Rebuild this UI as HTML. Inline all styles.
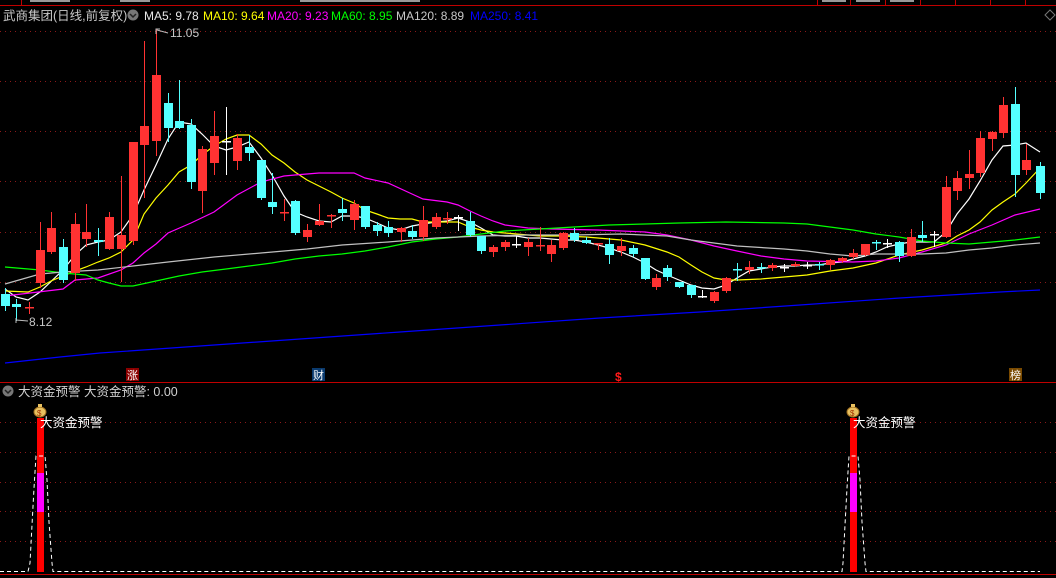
<!DOCTYPE html>
<html><head><meta charset="utf-8"><style>
html,body{margin:0;padding:0;background:#000;width:1056px;height:578px;overflow:hidden}
svg{display:block}
text{font-family:"Liberation Sans","Noto Sans CJK SC",sans-serif}
</style></head><body>
<svg id="s" width="1056" height="578" viewBox="0 0 1056 578" xmlns="http://www.w3.org/2000/svg">
<rect width="1056" height="578" fill="#000"/>
<!-- top strip -->
<line x1="0" y1="5.5" x2="1056" y2="5.5" stroke="#c00000"/>
<g stroke="#c00000"><line x1="21.5" y1="0" x2="21.5" y2="5"/><line x1="817.5" y1="0" x2="817.5" y2="5"/><line x1="850.5" y1="0" x2="850.5" y2="5"/><line x1="885.5" y1="0" x2="885.5" y2="5"/><line x1="920.5" y1="0" x2="920.5" y2="5"/><line x1="955.5" y1="0" x2="955.5" y2="5"/><line x1="990.5" y1="0" x2="990.5" y2="5"/><line x1="1025.5" y1="0" x2="1025.5" y2="5"/></g>
<g fill="#999"><rect x="30" y="0" width="40" height="2"/><rect x="120" y="0" width="30" height="2"/><rect x="300" y="0" width="120" height="2"/><rect x="822" y="0" width="24" height="2"/><rect x="856" y="0" width="24" height="2"/><rect x="890" y="0" width="24" height="2"/></g>
<!-- grid -->
<g stroke="#8a1a1a" stroke-dasharray="1 4">
<line x1="0" y1="31.5" x2="1056" y2="31.5"/><line x1="0" y1="81.5" x2="1056" y2="81.5"/><line x1="0" y1="131.5" x2="1056" y2="131.5"/><line x1="0" y1="181.5" x2="1056" y2="181.5"/><line x1="0" y1="232.5" x2="1056" y2="232.5"/><line x1="0" y1="282.5" x2="1056" y2="282.5"/>
<line x1="0" y1="422.5" x2="1056" y2="422.5"/><line x1="0" y1="452.5" x2="1056" y2="452.5"/><line x1="0" y1="482.5" x2="1056" y2="482.5"/><line x1="0" y1="511.5" x2="1056" y2="511.5"/><line x1="0" y1="541.5" x2="1056" y2="541.5"/>
</g>
<path d="M1050 10 L1055 15 L1050 20 L1045 15 Z" fill="none" stroke="#777"/>
<!-- header -->
<text x="3" y="20" font-size="12.5" fill="#c8c8c8">武商集团(日线,前复权)</text>
<circle cx="133" cy="15" r="5.5" fill="#777"/><path d="M130 14 L133 17 L136 14" stroke="#222" stroke-width="1.5" fill="none"/>
<text x="144" y="20" font-size="12" fill="#e8e8e8">MA5: 9.78</text>
<text x="203" y="20" font-size="12" fill="#ffff00">MA10: 9.64</text>
<text x="267" y="20" font-size="12" fill="#ff00ff">MA20: 9.23</text>
<text x="331" y="20" font-size="12" fill="#00ff00">MA60: 8.95</text>
<text x="396" y="20" font-size="12" fill="#c8c8c8">MA120: 8.89</text>
<text x="470" y="20" font-size="12" fill="#0000ff">MA250: 8.41</text>
<g id="ma"></g>
<g id="k"></g>
<!-- labels -->
<path d="M156 34 L156 29 L160 29 M157 30 L168 33" stroke="#bbb" fill="none"/>
<text x="170" y="37" font-size="12" fill="#c8c8c8">11.05</text>
<path d="M16 323 L16 318 M16 320 L28 321" stroke="#bbb" fill="none"/>
<text x="29" y="326" font-size="12" fill="#c8c8c8">8.12</text>
<!-- markers -->
<rect x="126" y="368" width="13" height="13" fill="#8b0000"/><text x="127" y="379" font-size="11" fill="#fff">涨</text>
<rect x="312" y="368" width="13" height="13" fill="#0a3a6e"/><text x="313" y="379" font-size="11" fill="#fff">财</text>
<text x="615" y="381" font-size="12" font-weight="bold" fill="#ff1a1a">$</text>
<rect x="1009" y="368" width="13" height="13" fill="#7a4a00"/><text x="1010" y="379" font-size="11" fill="#fff">榜</text>
<line x1="0" y1="382.5" x2="1056" y2="382.5" stroke="#c00000"/>
<line x1="0" y1="574.5" x2="1056" y2="574.5" stroke="#c00000"/>
<!-- lower panel -->
<circle cx="8" cy="391" r="5.5" fill="#777"/><path d="M5 390 L8 393 L11 390" stroke="#222" stroke-width="1.5" fill="none"/>
<text x="18" y="396" font-size="12.5" fill="#d0d0d0">大资金预警 大资金预警: 0.00</text>
<rect x="37" y="418" width="7" height="154" fill="#ff0000"/><rect x="37" y="473" width="7" height="39" fill="#ff00ff"/>
<rect x="850" y="418" width="7" height="154" fill="#ff0000"/><rect x="850" y="473" width="7" height="39" fill="#ff00ff"/>
<g stroke="#fff" stroke-dasharray="4 3" fill="none">
<path d="M0 571.5 L28 571.5 L30 563 L32 525 L34 488 L36 456 L45 456 L47 480 L49 522 L52 563 L53 571.5 L842 571.5 L843 563 L845 525 L847 488 L849 456 L858 456 L860 480 L862 522 L865 563 L866 571.5 L1040 571.5"/>
</g>
<g id="bag1"><ellipse cx="40" cy="412" rx="6" ry="5" fill="#e8c060" stroke="#a07020"/><rect x="38" y="404" width="4" height="3" fill="#e8c060"/><text x="37" y="416" font-size="8" fill="#a03000">$</text></g>
<g><ellipse cx="853" cy="412" rx="6" ry="5" fill="#e8c060" stroke="#a07020"/><rect x="851" y="404" width="4" height="3" fill="#e8c060"/><text x="850" y="416" font-size="8" fill="#a03000">$</text></g>
<text x="40" y="427" font-size="12.5" fill="#fff">大资金预警</text>
<text x="853" y="427" font-size="12.5" fill="#fff">大资金预警</text>
</svg>
<script>
var NS="http://www.w3.org/2000/svg";
// x, bodyTop, bodyBot, wickTop, wickBot, color(r/c/w)
var K=[
[5,294,306,288,310,'c'],[16,304,307,299,320,'c'],[29,307,308,302,313,'r'],[40,250,283,222,287,'r'],[51,228,252,212,253,'r'],
[63,247,280,239,282,'c'],[75,224,273,213,280,'r'],[86,232,239,204,246,'r'],[98,240,242,228,255,'c'],[109,217,249,212,249,'r'],
[121,235,249,176,281,'r'],[133,142,241,142,244,'r'],[144,126,145,41,197,'r'],[156,75,141,29,155,'r'],[168,103,128,93,141,'c'],
[179,121,128,80,128,'c'],[191,125,182,119,188,'c'],[202,149,191,146,212,'r'],[214,136,163,111,174,'r'],[226,141,142,107,174,'w'],
[237,138,161,134,169,'r'],[249,147,153,135,160,'c'],[261,160,198,160,199,'c'],[272,202,207,173,213,'c'],[284,212,213,199,220,'r'],
[295,201,233,200,234,'c'],[307,230,237,224,241,'r'],[319,221,225,204,225,'r'],[331,215,216,214,227,'r'],[342,209,213,198,220,'c'],
[354,204,220,200,229,'r'],[365,206,227,206,228,'c'],[377,225,231,222,235,'c'],[388,227,233,221,236,'c'],[401,228,232,227,241,'r'],
[412,231,237,225,238,'c'],[423,220,237,206,240,'r'],[436,217,227,213,228,'r'],[447,218,219,212,223,'r'],[458,217,218,215,230,'w'],
[470,221,235,212,236,'c'],[481,236,251,236,253,'c'],[493,247,252,245,256,'r'],[505,242,247,240,250,'r'],[516,244,245,236,247,'w'],
[528,242,247,238,255,'r'],[540,245,246,227,250,'r'],[551,245,254,240,261,'r'],[563,233,248,232,249,'r'],[574,233,240,228,241,'c'],
[586,240,243,237,243,'c'],[598,243,244,243,249,'r'],[609,244,255,238,263,'c'],[621,246,251,238,255,'r'],[633,248,254,245,256,'c'],
[645,258,279,258,279,'c'],[656,278,287,274,289,'r'],[667,268,277,265,280,'c'],[679,282,287,282,287,'c'],[691,285,295,285,297,'c'],
[702,296,297,290,297,'w'],[714,292,301,291,302,'r'],[726,278,291,277,292,'r'],[737,269,270,263,280,'c'],[749,267,270,261,273,'r'],
[761,267,268,263,272,'c'],[772,265,268,263,270,'r'],[784,267,268,264,271,'w'],[795,264,266,262,266,'r'],[807,265,266,262,268,'w'],
[819,264,265,262,269,'c'],[830,260,265,259,269,'r'],[842,258,261,257,262,'r'],[853,253,257,249,258,'r'],[865,244,255,244,255,'r'],
[876,242,243,240,249,'c'],[887,243,244,239,247,'w'],[899,242,256,241,261,'c'],[911,237,256,229,256,'r'],[922,235,238,221,241,'c'],
[934,234,235,231,246,'w'],[946,187,237,176,237,'r'],[957,178,191,171,199,'r'],[969,174,178,150,188,'r'],[980,138,173,131,176,'r'],
[992,132,139,131,150,'r'],[1003,105,133,97,137,'r'],[1015,104,175,87,196,'c'],[1026,160,170,144,174,'r'],[1040,166,193,162,198,'c']
];
var col={r:'#ff3232',c:'#54ffff',w:'#ffffff'};
var g=document.getElementById('k');
K.forEach(function(d){
 var x=d[0],c=col[d[5]];
 var l=document.createElementNS(NS,'rect');
 l.setAttribute('x',x);l.setAttribute('y',d[3]);l.setAttribute('width',1);l.setAttribute('height',d[4]-d[3]+1);l.setAttribute('fill',c);g.appendChild(l);
 var b=document.createElementNS(NS,'rect');
 var h=d[2]-d[1];if(h<2){b.setAttribute('x',x-4);b.setAttribute('y',d[1]);b.setAttribute('width',9);b.setAttribute('height',1.5);}
 else{b.setAttribute('x',x-4);b.setAttribute('y',d[1]);b.setAttribute('width',9);b.setAttribute('height',h);}
 b.setAttribute('fill',c);g.appendChild(b);
});
var M=[
['#ffffff',"5,289 16,297 28,300 40,292 63,270 75,255 86,245 98,242 109,240 121,232 133,215 144,190 156,165 168,139 179,122 191,124 202,134 214,146 226,150 237,147 249,142 261,158 272,175 284,196 295,212 307,217 319,221 331,222 342,216 354,216 365,218 377,223 388,228 400,230 412,226 423,224 436,222 447,221 458,218 470,222 481,228 493,235 505,236 516,236 528,238 540,238 551,239 563,240 574,240 586,242 598,245 609,248 621,252 633,257 645,263 656,270 667,275 679,280 691,285 702,288 714,289 726,285 737,278 749,271 761,269 772,267 784,266 795,266 807,265 819,265 830,263 842,262 853,259 865,256 876,252 887,247 899,244 911,242 922,242 934,242 946,232 957,214 969,199 980,181 992,160 1003,146 1015,145 1026,143 1040,152"],
['#ffff00',"5,291 28,292 40,287 51,281 63,276 75,271 86,267 98,262 109,258 121,252 133,240 144,214 156,198 168,185 179,172 191,165 202,155 214,146 226,139 237,135 249,135 261,144 272,155 284,163 295,172 307,180 319,186 331,192 342,198 354,203 365,210 377,214 388,218 400,219 412,219 423,222 447,222 458,222 470,227 481,230 493,232 505,233 528,235 540,236 563,236 586,237 598,238 621,240 645,245 667,252 679,257 691,265 702,272 714,278 726,280 737,280 761,279 784,277 807,275 830,271 853,268 876,263 899,255 922,250 946,243 957,236 969,230 980,222 992,210 1003,202 1015,194 1026,183 1040,168"],
['#ff00ff',"5,296 63,289 75,280 98,278 121,270 133,263 144,253 156,244 168,233 191,223 214,212 237,195 261,182 284,176 295,175 319,173 354,173 365,178 388,183 412,194 423,199 447,202 458,205 470,211 481,216 493,221 505,225 528,228 551,229 598,230 645,232 667,235 691,240 714,246 737,251 761,256 784,259 807,261 853,262 876,261 899,258 922,252 946,245 969,234 992,225 1015,215 1040,209"],
['#00ff00',"5,267 40,270 63,273 86,275 98,280 109,283 121,286 133,286 156,281 179,276 202,272 226,269 249,266 272,263 295,259 319,256 342,254 365,251 388,247 412,242 436,239 458,237 481,234 505,231 540,229 574,227 609,225 645,224 679,223 726,222 784,223 807,224 830,227 853,230 876,234 899,237 922,241 946,243 969,244 992,242 1015,240 1040,237"],
['#c0c0c0',"5,284 40,274 63,272 98,270 133,266 168,262 214,257 261,253 307,249 342,245 388,242 436,238 481,236 528,235 574,235 621,234 667,236 691,240 714,243 737,246 784,249 807,251 830,254 853,256 876,254 922,254 946,253 969,250 992,248 1015,245 1040,243"],
['#0000ff',"5,363 60,357 100,353 200,346 300,339 400,332 500,325 600,318 700,312 800,305 900,298 1000,292 1040,290"]
];
var mg=document.getElementById('ma');
M.forEach(function(m){var p=document.createElementNS(NS,'polyline');p.setAttribute('points',m[1]);p.setAttribute('fill','none');p.setAttribute('stroke',m[0]);p.setAttribute('stroke-width','1.2');mg.appendChild(p);});
</script>
</body></html>
